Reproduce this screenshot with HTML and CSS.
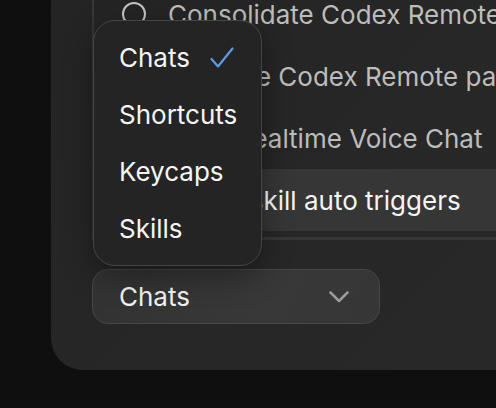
FILE: index.html
```html
<!DOCTYPE html>
<html lang="en">
<head>
<meta charset="utf-8">
<title>Tasks</title>
<link rel="stylesheet" href="styles.css">
</head>
<body>
<div class="panel">
  <ul class="task-list">
    <li class="task">
      <svg class="status" viewBox="0 0 26 26" width="26" height="26"><circle cx="13" cy="13" r="11" /></svg>
      <span class="task-title">Consolidate Codex Remote settings</span>
    </li>
    <li class="task">
      <svg class="status" viewBox="0 0 26 26" width="26" height="26"><circle cx="13" cy="13" r="11" /></svg>
      <span class="task-title">Hide the Codex Remote page</span>
    </li>
    <li class="task">
      <svg class="status" viewBox="0 0 26 26" width="26" height="26"><circle cx="13" cy="13" r="11" /></svg>
      <span class="task-title">Tune Realtime Voice Chat</span>
    </li>
    <li class="task task-active">
      <svg class="status" viewBox="0 0 26 26" width="26" height="26"><circle cx="13" cy="13" r="11" /></svg>
      <span class="task-title">Fix up skill auto triggers</span>
    </li>
  </ul>

  <button class="select" type="button">
    <span>Chats</span>
    <svg class="chevron" viewBox="0 0 20 12" width="20" height="12"><path d="M1.5 1.5 L10 10 L18.5 1.5" /></svg>
  </button>

  <div class="menu" role="menu">
    <div class="menu-item">
      <span>Chats</span>
      <svg class="check" viewBox="0 0 24 22" width="24" height="22"><path d="M1.5 12 L8 19.5 L22.5 1.5" /></svg>
    </div>
    <div class="menu-item"><span>Shortcuts</span></div>
    <div class="menu-item"><span>Keycaps</span></div>
    <div class="menu-item"><span>Skills</span></div>
  </div>
</div>
</body>
</html>
```

FILE: styles.css
```css
* {
  box-sizing: border-box;
}

html, body {
  margin: 0;
  height: 100%;
}

body {
  background: #0f0f0f;
  font-family: Inter, "Noto Sans", sans-serif;
  font-size: 26px;
  overflow: hidden;
}

.panel {
  position: relative;
  margin-left: 51px;
  height: 370px;
  padding-left: 41px;
  background: linear-gradient(135deg, #242424 0%, #272727 60%, #282828 100%);
  border-bottom-left-radius: 32px;
  overflow: hidden;
}

.task-list {
  list-style: none;
  margin: -17px 0 0;
  padding: 0 0 6px;
  border-left: 2px solid #363636;
  border-bottom: 3px solid #363636;
}

.task {
  height: 62px;
  display: flex;
  align-items: center;
  gap: 21px;
  padding-left: 27px;
  color: #bdbdbd;
  white-space: nowrap;
}

.task-active {
  background: #363636;
  color: #f4f4f4;
}

.status {
  flex: none;
  fill: none;
  stroke: #c4c4c4;
  stroke-width: 2;
}

.select {
  margin-top: 29px;
  width: 288px;
  height: 55px;
  display: flex;
  align-items: center;
  justify-content: space-between;
  padding: 0 30px 0 26px;
  border: 1.5px solid #464646;
  border-radius: 16px;
  background: linear-gradient(110deg, #323232 0%, #383838 60%, #363636 100%);
  color: #f2f2f2;
  font: inherit;
}

.chevron {
  fill: none;
  stroke: #9c9c9c;
  stroke-width: 2.5;
  stroke-linecap: round;
  stroke-linejoin: round;
}

.menu {
  position: absolute;
  left: 42px;
  top: 20px;
  width: 169px;
  padding: 8px 0;
  background: #242424;
  border: 1px solid #454545;
  border-radius: 22px;
  box-shadow: 0 10px 30px rgba(0, 0, 0, 0.35);
}

.menu-item {
  height: 57px;
  display: flex;
  align-items: center;
  gap: 20px;
  padding-left: 25px;
  color: #f5f5f5;
}

.check {
  fill: none;
  stroke: #5d9be4;
  stroke-width: 2.2;
  stroke-linecap: round;
  stroke-linejoin: round;
}
```
